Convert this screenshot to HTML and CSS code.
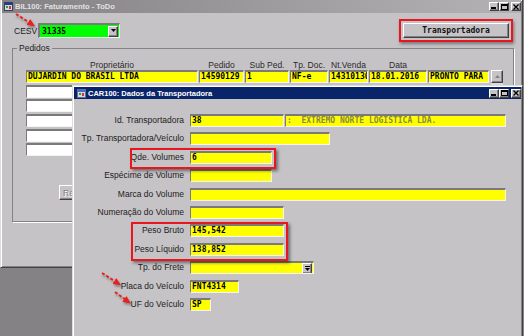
FILE: index.html
```html
<!DOCTYPE html>
<html>
<head>
<meta charset="utf-8" />
<title>BIL100: Faturamento - ToDo</title>
<link rel="stylesheet" href="styles.css">
</head>
<body>
<div class="win main">
    <div class="caption inactive">
        <svg class="appicon" viewBox="0 0 9 9"><rect x="0.5" y="0.5" width="8" height="8" fill="#d8d8d8" stroke="#3a3a6a"/><rect x="1" y="1" width="7" height="2" fill="#1c3c9c"/><rect x="2" y="4" width="2" height="2" fill="#2c9c3c"/><rect x="5" y="4" width="2" height="3" fill="#c83c2c"/></svg>
        <span>BIL100: Faturamento - ToDo</span>
        <div class="capbtns">
            <span class="capbtn"><svg width="6" height="5"><rect x="0" y="3" width="5" height="2" fill="#000"/></svg></span>
            <span class="capbtn"><svg width="7" height="6"><rect x="0.5" y="0.5" width="6" height="5" fill="none" stroke="#000"/><rect x="0" y="0" width="7" height="2" fill="#000"/></svg></span>
            <span class="capbtn close"><svg width="6" height="6"><path d="M0.5 0.5 L5.5 5.5 M5.5 0.5 L0.5 5.5" stroke="#000" stroke-width="1.4"/></svg></span>
        </div>
    </div>
    <div class="toolbar">
        <span class="lbl-cesv">CESV</span>
        <div class="combo">
            <span class="val">31335</span>
            <span class="dd"><svg width="5" height="4"><path d="M0 0 H5 L2.5 3 Z" fill="#000"/></svg></span>
        </div>
        <span class="hl"><button class="btn btn-transp">Transportadora</button></span>
    </div>
    <fieldset class="group">
        <legend>Pedidos</legend>
        <div class="head">
            <span>Proprietário</span><span>Pedido</span><span>Sub Ped.</span><span>Tp. Doc.</span><span>Nt.Venda</span><span>Data</span><span></span>
        </div>
        <div class="table">
            <div class="rows">
                <div class="row sel">
                    <span class="cell">DUJARDIN DO BRASIL LTDA</span><span class="cell">14590129</span><span class="cell">1</span><span class="cell">NF-e</span><span class="cell">14310130</span><span class="cell">18.01.2016</span><span class="cell">PRONTO PARA</span>
                </div>
                <div class="row"><span class="cell"></span><span class="cell"></span><span class="cell"></span><span class="cell"></span><span class="cell"></span><span class="cell"></span><span class="cell"></span></div>
                <div class="row"><span class="cell"></span><span class="cell"></span><span class="cell"></span><span class="cell"></span><span class="cell"></span><span class="cell"></span><span class="cell"></span></div>
                <div class="row"><span class="cell"></span><span class="cell"></span><span class="cell"></span><span class="cell"></span><span class="cell"></span><span class="cell"></span><span class="cell"></span></div>
                <div class="row"><span class="cell"></span><span class="cell"></span><span class="cell"></span><span class="cell"></span><span class="cell"></span><span class="cell"></span><span class="cell"></span></div>
                <div class="row"><span class="cell"></span><span class="cell"></span><span class="cell"></span><span class="cell"></span><span class="cell"></span><span class="cell"></span><span class="cell"></span></div>
            </div>
            <div class="vscroll">
                <span class="sbtn"><svg width="5" height="3"><path d="M0 3 H5 L2.5 0 Z" fill="#848284"/></svg></span>
                <span class="track"></span>
            </div>
        </div>
        <button class="btn btn-re" disabled>Reabrir</button>
    </fieldset>
</div>

<div class="win dialog">
    <div class="caption active">
        <svg class="appicon" viewBox="0 0 9 9"><rect x="0.5" y="0.5" width="8" height="8" fill="#d8d8d8" stroke="#6a6a9a"/><rect x="1" y="1" width="7" height="2" fill="#3c6cdc"/><rect x="2" y="4" width="2" height="2" fill="#2c9c3c"/><rect x="5" y="4" width="2" height="3" fill="#c83c2c"/></svg>
        <span>CAR100: Dados da Transportadora</span>
        <div class="capbtns">
            <span class="capbtn"><svg width="6" height="5"><rect x="0" y="3" width="5" height="2" fill="#000"/></svg></span>
            <span class="capbtn"><svg width="7" height="6"><rect x="0.5" y="0.5" width="6" height="5" fill="none" stroke="#000"/><rect x="0" y="0" width="7" height="2" fill="#000"/></svg></span>
            <span class="capbtn close"><svg width="6" height="6"><path d="M0.5 0.5 L5.5 5.5 M5.5 0.5 L0.5 5.5" stroke="#000" stroke-width="1.4"/></svg></span>
        </div>
    </div>
    <div class="form">
        <label>Id. Transportadora</label>
        <div class="fields"><span class="fld w94">38</span><span class="fld w221 dim">:  EXTREMO NORTE LOGÍSTICA LDA.</span></div>
        <label>Tp. Transportadora/Veículo</label>
        <div class="fields"><span class="fld w140"></span></div>
        <label>Qde. Volumes</label>
        <div class="fields"><span class="fld w82">6</span></div>
        <label>Espécime de Volume</label>
        <div class="fields"><span class="fld w82"></span></div>
        <label>Marca do Volume</label>
        <div class="fields"><span class="fld w316"></span></div>
        <label>Numeração do Volume</label>
        <div class="fields"><span class="fld w94"></span></div>
        <label>Peso Bruto</label>
        <div class="fields"><span class="fld w94">145,542</span></div>
        <label>Peso Líquido</label>
        <div class="fields"><span class="fld w94">138,852</span></div>
        <label>Tp. do Frete</label>
        <div class="fields"><span class="fld w124 fcombo"><span class="val"></span><span class="dd"><svg width="5" height="5"><rect x="0" y="0" width="5" height="1" fill="#000"/><path d="M0 2 H5 L2.5 5 Z" fill="#000"/></svg></span></span></div>
        <label>Placa do Veículo</label>
        <div class="fields"><span class="fld w49">FNT4314</span></div>
        <label>UF do Veículo</label>
        <div class="fields"><span class="fld w21">SP</span></div>
    </div>
</div>

<div class="mark mark-vol"></div>
<div class="mark mark-peso"></div>

<svg class="arrows" width="524" height="336">
    <defs>
        <marker id="ah" markerWidth="8" markerHeight="7" refX="2" refY="3.5" orient="auto" markerUnits="userSpaceOnUse">
            <path d="M0 0 L8 3.5 L0 7 Z" fill="#e8201e"/>
        </marker>
    </defs>
    <g stroke="#e8201e" stroke-width="2" stroke-dasharray="3 2" fill="none" marker-end="url(#ah)">
        <line x1="16" y1="14" x2="30" y2="23"/>
        <line x1="102" y1="273" x2="116" y2="282"/>
        <line x1="115" y1="292" x2="126" y2="300"/>
    </g>
</svg>
</body>
</html>
```

FILE: styles.css
```css
*{ box-sizing:border-box; }
body{
    margin:0;
    width:524px;
    height:336px;
    overflow:hidden;
    position:relative;
    background:#858285;
    font-family:"Liberation Sans", Arial, sans-serif;
    font-size:8.5px;
    color:#1c1c1c;
}

/* windows */
.win{
    position:absolute;
    background:#c6c3c6;
    border:1px solid;
    border-color:#dedbde #424142 #424142 #dedbde;
    box-shadow:inset 1px 1px #fff, inset -1px -1px #848284;
    padding:1px;
}
.main{ left:0; top:0; width:523px; height:268px; border-top:0; padding-top:0; }
.dialog{ left:72px; top:85px; width:451px; height:260px; }

.caption{
    display:flex;
    align-items:center;
    height:13px;
    padding-left:2px;
    font-weight:bold;
    font-size:7.5px;
    color:#fff;
}
.caption.inactive{ background:linear-gradient(to right, #848284, #b5b2b5); color:#e2e2e2; }
.caption.active{ height:12px; padding-left:3px; background:#0a246a; }
.appicon{ width:9px; height:9px; margin-right:2px; flex:none; }
.capbtns{ margin-left:auto; display:flex; }
.capbtn{
    width:10px;
    height:9px;
    display:flex;
    align-items:center;
    justify-content:center;
    background:#c6c3c6;
    border:1px solid;
    border-color:#fff #424142 #424142 #fff;
    box-shadow:inset -1px -1px #848284;
}
.capbtn.close{ margin-left:2px; }

/* main toolbar */
.toolbar{
    display:flex;
    align-items:center;
    height:15px;
    margin-top:10px;
    padding-left:12px;
    padding-right:8px;
}
.lbl-cesv{ width:24px; }
.combo{
    display:flex;
    align-items:center;
    width:82px;
    height:15px;
    padding:0 1px;
    background:#00ff00;
    border-style:solid;
    border-width:2px 1px 1px 2px;
    border-color:#7b797b #f4f4f4 #f4f4f4 #7b797b;
}
.val, .cell, .fld{
    font-family:"DejaVu Sans Mono", "Liberation Mono", monospace;
    font-weight:bold;
    font-size:8px;
    color:#000;
}
.combo .val{ flex:1; padding-left:1px; }
.dd{
    width:10px;
    height:11px;
    display:flex;
    align-items:center;
    justify-content:center;
    background:#c6c3c6;
    border:1px solid;
    border-color:#fff #424142 #424142 #fff;
    box-shadow:inset -1px -1px #848284;
}
.hl{
    margin-left:auto;
    display:flex;
    padding:2px;
    border:2px solid #e8161e;
    box-shadow:1px 2px 3px rgba(0,0,0,.4);
}
.btn{
    background:#c6c3c6;
    border:1px solid;
    border-color:#fff #424142 #424142 #fff;
    box-shadow:inset -1px -1px #848284;
    padding:0;
    color:#111;
}
.btn-transp{
    width:106px;
    height:15px;
    font-family:"DejaVu Sans Mono", "Liberation Mono", monospace;
    font-weight:bold;
    font-size:8px;
}

/* Pedidos group */
.group{
    margin:5px 0 0 10px;
    width:502px;
    height:179px;
    min-width:0;
    padding:0;
    border:1px solid #848284;
    box-shadow:1px 1px #fff;
}
.group legend{
    margin-left:4px;
    padding:0 2px;
    line-height:10px;
    font-size:8.5px;
}
.head, .row{
    display:grid;
    grid-template-columns:172px 45px 44px 38px 39px 58px 61px;
    column-gap:1px;
}
.head{
    margin:7px 0 0 13px;
    line-height:10px;
    text-align:center;
    color:#2a2a2a;
}
.table{
    display:flex;
    gap:2px;
    margin-left:13px;
}
.row{ height:13px; margin-bottom:1.7px; }
.cell{
    overflow:hidden;
    white-space:pre;
    line-height:10px;
    padding-left:1px;
    background:#fff;
    border-style:solid;
    border-width:2px 1px 1px 1px;
    border-color:#7b797b #f4f4f4 #f4f4f4 #7b797b;
}
.sel .cell{ background:#ffff00; }
.vscroll{ width:12px; display:flex; flex-direction:column; }
.sbtn{
    height:13px;
    display:flex;
    align-items:center;
    justify-content:center;
    background:#c6c3c6;
    border:1px solid;
    border-color:#fff #424142 #424142 #fff;
    box-shadow:inset -1px -1px #848284;
}
.track{ flex:1; background:#dcdadc; }
.btn-re{
    display:block;
    margin:27px 0 0 46px;
    width:60px;
    height:15px;
    font-family:"Liberation Sans", Arial, sans-serif;
    font-size:8.5px;
    text-align:left;
    padding-left:3px;
    color:#848284;
    text-shadow:1px 1px #fff;
}

/* dialog form */
.form{
    display:grid;
    grid-template-columns:110px 1fr;
    column-gap:6px;
    grid-auto-rows:13px;
    row-gap:5.4px;
    padding-top:15px;
}
.form label{
    text-align:right;
    line-height:13px;
    white-space:nowrap;
    color:#1c1c1c;
}
.fields{ display:flex; gap:1px; }
.fld{
    display:block;
    height:13px;
    line-height:10px;
    padding-left:1px;
    white-space:pre;
    overflow:hidden;
    background:#ffff00;
    border-style:solid;
    border-width:2px 1px 1px 1px;
    border-color:#7b797b #f4f4f4 #f4f4f4 #7b797b;
}
.fld.dim{ color:#8c8a42; }
.fcombo{ display:flex; align-items:center; padding-right:1px; }
.fcombo .val{ flex:1; }
.w21{ width:21px; }
.w49{ width:49px; }
.w82{ width:82px; }
.w94{ width:94px; }
.w124{ width:124px; }
.w140{ width:140px; }
.w221{ width:221px; }
.w316{ width:316px; }

/* annotations */
.mark{
    position:absolute;
    border:2px solid #e8161e;
    box-shadow:2px 2px 3px rgba(0,0,0,.45);
}
.mark-vol{ left:130px; top:148px; width:146px; height:21px; }
.mark-peso{ left:131px; top:222px; width:157px; height:39px; }
.arrows{
    position:absolute;
    left:0;
    top:0;
    pointer-events:none;
    filter:drop-shadow(1px 2px 1px rgba(0,0,0,.35));
}
```
